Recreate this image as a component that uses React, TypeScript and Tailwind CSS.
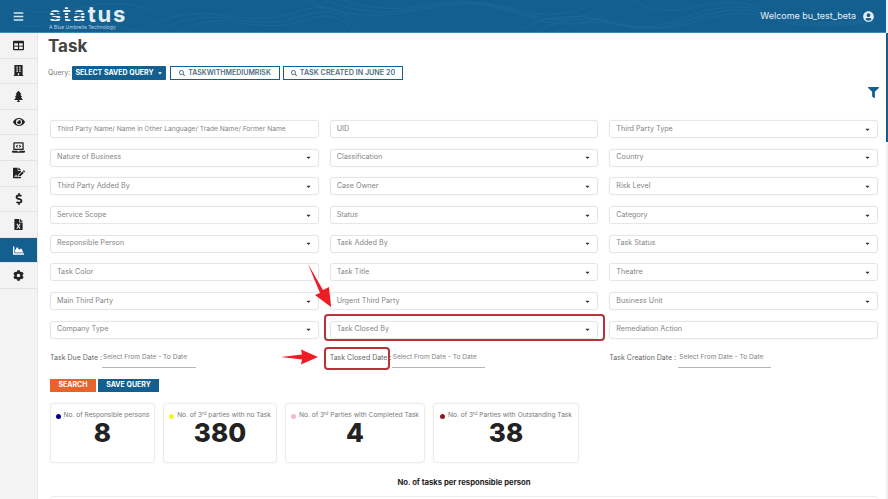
import { FaBars, FaBuilding, FaCaretDown, FaChartArea, FaCog, FaDollarSign, FaEye, FaFileExcel, FaFileSignature, FaFilter, FaLaptopCode, FaSearch, FaTree, FaUserCircle } from "react-icons/fa";

function TableIcon({ size }: { size: number }) {
  return (
    <svg width={size} height={size} viewBox="0 0 14 12">
      <rect width="14" height="12" rx="1.2" fill="currentColor" />
      <rect x="1.6" y="3.2" width="4.7" height="3" fill="#f3f3f3" />
      <rect x="7.7" y="3.2" width="4.7" height="3" fill="#f3f3f3" />
      <rect x="1.6" y="7.4" width="4.7" height="3" fill="#f3f3f3" />
      <rect x="7.7" y="7.4" width="4.7" height="3" fill="#f3f3f3" />
    </svg>
  );
}

const NAV = [
  { icon: TableIcon, size: 11 },
  { icon: FaBuilding, size: 11 },
  { icon: FaTree, size: 11 },
  { icon: FaEye, size: 12 },
  { icon: FaLaptopCode, size: 13 },
  { icon: FaFileSignature, size: 12 },
  { icon: FaDollarSign, size: 12 },
  { icon: FaFileExcel, size: 11 },
  { icon: FaChartArea, size: 11, active: true },
  { icon: FaCog, size: 11 },
];

const FIELDS = [
  { label: "Third Party Name/ Name in Other Language/ Trade Name/ Former Name", plain: true, small: true },
  { label: "UID", plain: true },
  { label: "Third Party Type" },
  { label: "Nature of Business" },
  { label: "Classification" },
  { label: "Country" },
  { label: "Third Party Added By" },
  { label: "Case Owner" },
  { label: "Risk Level" },
  { label: "Service Scope" },
  { label: "Status" },
  { label: "Category" },
  { label: "Responsible Person" },
  { label: "Task Added By" },
  { label: "Task Status" },
  { label: "Task Color", plain: true },
  { label: "Task Title" },
  { label: "Theatre" },
  { label: "Main Third Party" },
  { label: "Urgent Third Party" },
  { label: "Business Unit" },
  { label: "Company Type" },
  { label: "Task Closed By" },
  { label: "Remediation Action", plain: true },
];

function Contours() {
  return (
    <svg className="absolute inset-0 h-full w-full" viewBox="0 0 888 33" fill="none" stroke="#2f78a5" strokeWidth="0.6" opacity="0.55">
      <path d="M130 33c20-14 50-22 80-18s50 8 80-2 50-8 70 20" />
      <path d="M170 33c16-10 36-14 60-10s50 6 70-2 40-6 50 12" />
      <path d="M150 33c18-12 44-18 70-14s50 7 76-2 44-7 60 16" />
      <path d="M300 0c30 14 70 20 110 12s70-12 110 2 60 14 90 2" />
      <path d="M340 0c26 8 50 12 80 6s60-6 90 2 50 10 80 0" />
      <path d="M320 0c28 11 60 16 95 9s65-9 100 2 55 12 85 1" />
      <path d="M520 33c24-16 60-20 90-12s50 10 80-2 60-16 90-6 50 14 108 6" />
      <path d="M560 33c18-9 40-13 60-8s50 8 80-2 60-12 80-4 50 10 108 4" />
      <path d="M540 33c21-13 50-17 75-10s50 9 80-2 60-14 85-5 50 12 108 5" />
      <path d="M640 0c14 10 36 14 60 8s50-8 70 0" />
      <path d="M0 8c20 6 50 6 70 0s50-6 70 2" />
      <path d="M0 26c24 4 50-4 80-2s40 6 50 9" />
    </svg>
  );
}

function Field({ label, plain, small }: { label: string; plain?: boolean; small?: boolean }) {
  return (
    <div className="flex h-[18px] items-center justify-between rounded-[3px] border border-[#e6e6e6] bg-white pl-[6px] pr-[6px] shadow-[0_0_2px_rgba(0,0,0,0.05)]">
      <span className={`whitespace-nowrap text-[#858585] ${small ? "text-[6.7px]" : "text-[7.2px]"}`}>{label}</span>
      {!plain && <FaCaretDown className="text-[#333]" size={7} />}
    </div>
  );
}

function DateField({ label, labelWidth, lineWidth }: { label: string; labelWidth: string; lineWidth: string }) {
  return (
    <div className="flex h-[18px] items-center text-[#666]">
      <span className={`whitespace-nowrap text-[7px] ${labelWidth}`}>{label} :</span>
      <span className={`flex h-[18px] items-center whitespace-nowrap border-b border-[#b5b5b5] pl-[1px] text-[6.6px] text-[#858585] ${lineWidth}`}>
        Select From Date - To Date
      </span>
    </div>
  );
}

function Stat({ dot, children, value, width }: { dot: string; children: React.ReactNode; value: string; width: string }) {
  return (
    <div className={`flex h-[60px] flex-col items-center rounded-[4px] border border-[#ececec] bg-white pt-[7px] shadow-[0_0_3px_rgba(0,0,0,0.05)] ${width}`}>
      <div className="flex h-[11px] items-center gap-[3px] whitespace-nowrap text-[6.6px] text-[#777]">
        <span className={`h-[5px] w-[5px] rounded-full ${dot}`} />
        <span>{children}</span>
      </div>
      <div className="-mt-[1px] text-[26px] leading-[24px] font-extrabold text-[#222]">{value}</div>
    </div>
  );
}

export default function App() {
  return (
    <div className="relative flex h-[499px] w-[888px] flex-col overflow-hidden bg-white font-['Inter',sans-serif] text-[8px]">
      <header className="relative flex h-[33px] shrink-0 items-center justify-between border-b border-[#3b8bb8] bg-[#135f8f] pr-[14px] pl-[13px] text-white">
        <Contours />
        <div className="relative flex items-center">
          <FaBars className="text-[#d7e6f0]" size={11} />
          <div className="ml-[25px] flex flex-col pt-[2px]">
            <div className="h-[18px] text-[22px] leading-[18px] font-bold tracking-[1.8px] text-[#e2eef6]">
              <span className="bg-[repeating-linear-gradient(180deg,#e2eef6_0,#e2eef6_2px,#135f8f_2px,#135f8f_3px)] bg-clip-text text-transparent">sta</span>
              tus
            </div>
            <div className="mt-[1px] text-[5px] leading-[6px] text-[#b9d3e4]">A Blue Umbrella Technology</div>
          </div>
        </div>
        <div className="relative flex items-center gap-[7px] text-[9px] text-[#e6f0f6]">
          <span>Welcome bu_test_beta</span>
          <FaUserCircle size={11} />
        </div>
      </header>

      <div className="flex min-h-0 flex-1">
        <nav className="w-[38px] shrink-0 border-r border-[#e6e6e6] bg-[#f3f3f3]">
          {NAV.map(({ icon: Icon, size, active }, i) => (
            <div
              key={i}
              className={`flex h-[25.6px] items-center justify-center border-b border-[#e2e2e2] ${active ? "bg-[#135f8f] text-white" : "text-[#222]"}`}
            >
              <Icon size={size} />
            </div>
          ))}
        </nav>

        <main className="min-w-0 flex-1 pr-[10px] pl-[10px]">
          <h1 className="h-[27px] text-[17px] leading-[27px] font-bold text-[#444]">Task</h1>
          <div className="mt-[6px] flex h-[14px] items-center text-[#777]">
            <span className="w-[24px] text-[7px]">Query:</span>
            <span className="flex h-[14px] w-[94px] items-center justify-center gap-[3px] rounded-[1px] bg-[#135f8f] text-[7px] font-bold text-white">
              SELECT SAVED QUERY <FaCaretDown size={6} />
            </span>
            <span className="ml-[4px] flex h-[14px] w-[110px] items-center justify-center gap-[3px] border border-[#135f8f] text-[7px] font-semibold text-[#4d6f86]">
              <FaSearch size={6} /> TASKWITHMEDIUMRISK
            </span>
            <span className="ml-[3px] flex h-[14px] w-[120px] items-center justify-center gap-[3px] border border-[#135f8f] text-[7.2px] font-semibold text-[#4d6f86]">
              <FaSearch size={6} /> TASK CREATED IN JUNE 20
            </span>
          </div>
          <div className="mt-[7px] -mr-[1px] flex h-[13px] justify-end">
            <FaFilter className="text-[#135f8f]" size={11} />
          </div>

          <div className="mt-[20px] ml-[2px] grid grid-cols-3 gap-x-[11px] gap-y-[10.7px]">
            {FIELDS.map((f) => (
              <Field key={f.label} label={f.label} plain={f.plain} small={f.small} />
            ))}
            <DateField label="Task Due Date" labelWidth="w-[52px]" lineWidth="w-[94px]" />
            <DateField label="Task Closed Date" labelWidth="w-[62px]" lineWidth="w-[93px]" />
            <DateField label="Task Creation Date" labelWidth="w-[69px]" lineWidth="w-[93px]" />
          </div>

          <div className="mt-[11px] ml-[2px] flex gap-[2px] text-[7px] font-bold text-white">
            <span className="flex h-[13px] w-[46px] items-center justify-center bg-[#e8622c]">SEARCH</span>
            <span className="flex h-[13px] w-[61px] items-center justify-center bg-[#135f8f]">SAVE QUERY</span>
          </div>

          <div className="mt-[11px] ml-[2px] flex gap-[8px]">
            <Stat dot="bg-[#00008b]" value="8" width="w-[105px]">No. of Responsible persons</Stat>
            <Stat dot="bg-[#f5f52a]" value="380" width="w-[114px]">
              No. of 3<sup className="text-[4.5px]">rd</sup> parties with no Task
            </Stat>
            <Stat dot="bg-[#f2bccb]" value="4" width="w-[140px]">
              No. of 3<sup className="text-[4.5px]">rd</sup> Parties with Completed Task
            </Stat>
            <Stat dot="bg-[#8b1c24]" value="38" width="w-[146px]">
              No. of 3<sup className="text-[4.5px]">rd</sup> Parties with Outstanding Task
            </Stat>
          </div>

          <h2 className="mt-[14px] ml-[2px] text-center text-[7.7px] font-bold text-[#222]">No. of tasks per responsible person</h2>
          <div className="mt-[8px] ml-[2px] h-[10px] rounded-t-[3px] border border-[#ececec]" />
        </main>
      </div>

      {/* scrollbar */}
      <div className="absolute top-0 right-0 h-full w-[2px] bg-[#f1f1f1]">
        <div className="mt-[33px] h-[109px] bg-[#135f8f]" />
      </div>

      {/* annotations drawn over the screenshot */}
      <div className="absolute top-[314px] left-[324px] h-[27px] w-[281px] rounded-[4px] border-2 border-[#b8343a]" />
      <div className="absolute top-[347px] left-[324px] h-[23px] w-[66px] rounded-[4px] border-2 border-[#b8343a]" />
      <svg className="absolute top-[262px] left-[305px]" width="30" height="48" viewBox="0 0 30 48">
        <path d="M3 2 L18 28 L24 25 L26 45 L10 33 L15 31 Z" fill="#ee1c25" />
      </svg>
      <svg className="absolute top-[349px] left-[280px]" width="40" height="16" viewBox="0 0 40 16">
        <path d="M1 8 L22 5.5 L21 0.5 L38 8 L21 15.5 L22 10.5 Z" fill="#ee1c25" />
      </svg>
    </div>
  );
}
